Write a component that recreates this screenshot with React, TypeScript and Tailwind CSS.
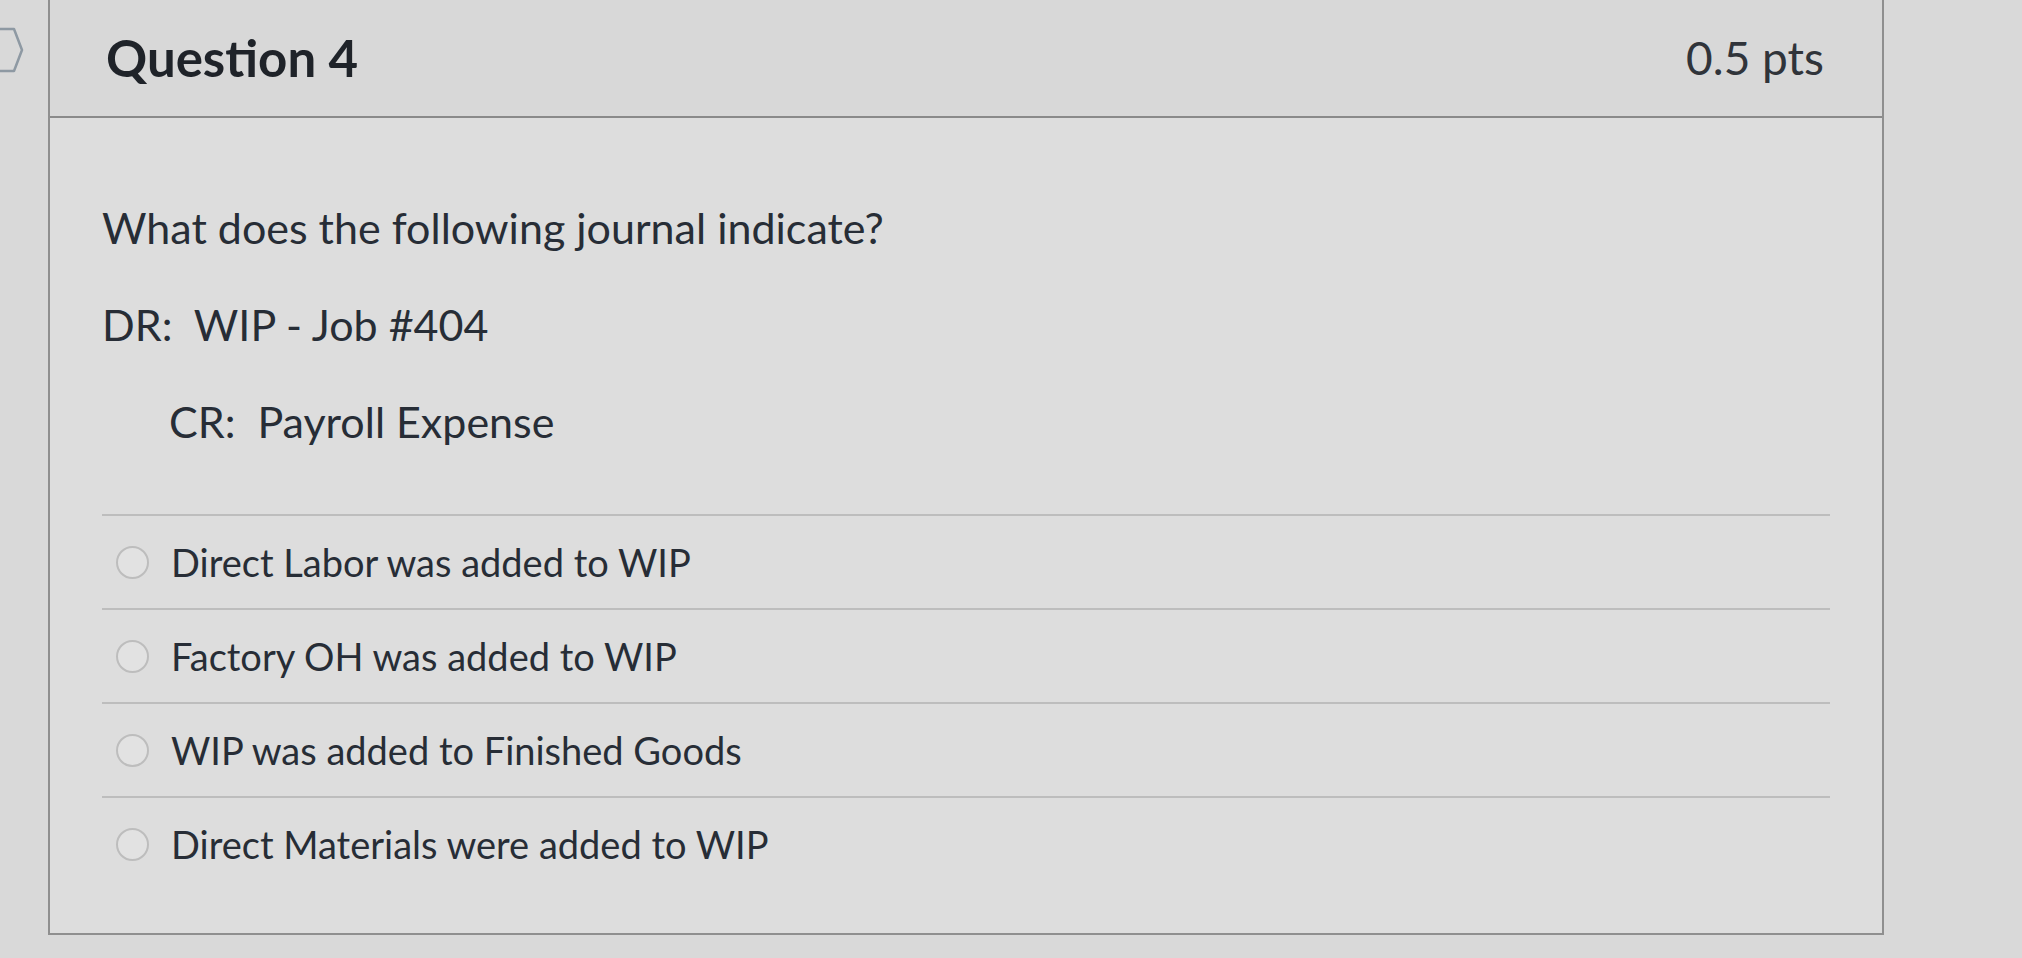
import React from "react";

const options = [
  "Direct Labor was added to WIP",
  "Factory OH was added to WIP",
  "WIP was added to Finished Goods",
  "Direct Materials were added to WIP",
];

const Radio: React.FC = () => (
  <span className="mt-[11px] block h-[33px] w-[33px] shrink-0 rounded-full border-[2.5px] border-[#bdbdbd] bg-[#e2e2e2]" />
);

const FlagIcon: React.FC = () => (
  <svg width="26" height="46" viewBox="0 0 26 46" className="mt-[27px]">
    <path
      d="M-2 2 H14 L22 23 L14 44 H-2"
      fill="none"
      stroke="#8e99a3"
      strokeWidth="2.5"
      strokeLinejoin="round"
    />
  </svg>
);

export default function App() {
  return (
    <div
      className="flex h-[958px] w-[2022px] overflow-hidden bg-[#d9d9d9] text-[#272d36]"
      style={{ fontFamily: "Lato, 'Open Sans', sans-serif" }}
    >
      <div className="w-[48px] shrink-0">
        <FlagIcon />
      </div>

      <div className="flex h-[935px] w-[1836px] shrink-0 flex-col border-x-2 border-b-2 border-[#8f8f8f] bg-[#dddddd]">
        <div className="flex h-[118px] shrink-0 items-center justify-between border-b-2 border-[#8a8a8a] bg-[#d8d8d8] pl-[56px] pr-[58px]">
          <h2 className="text-[51px] font-bold leading-[1.2] text-[#1f2329]">Question 4</h2>
          <span className="text-[46px] leading-[1.2] text-[#30343a]">0.5 pts</span>
        </div>

        <div className="px-[52px] pt-[80px]">
          <div className="text-[43px] leading-[60px]">
            <p>What does the following journal indicate?</p>
            <p className="mt-[37px]">DR:&nbsp; WIP - Job #404</p>
            <p className="mt-[37px] pl-[67px]">CR:&nbsp; Payroll Expense</p>
          </div>

          <div className="mt-[62px]">
            {options.map((label) => (
              <div
                key={label}
                className="flex items-start gap-[22px] border-t-2 border-[#bdbdbd] py-[19px] pl-[14px]"
              >
                <Radio />
                <span className="text-[38px] leading-[54px]">{label}</span>
              </div>
            ))}
          </div>
        </div>
      </div>
    </div>
  );
}
